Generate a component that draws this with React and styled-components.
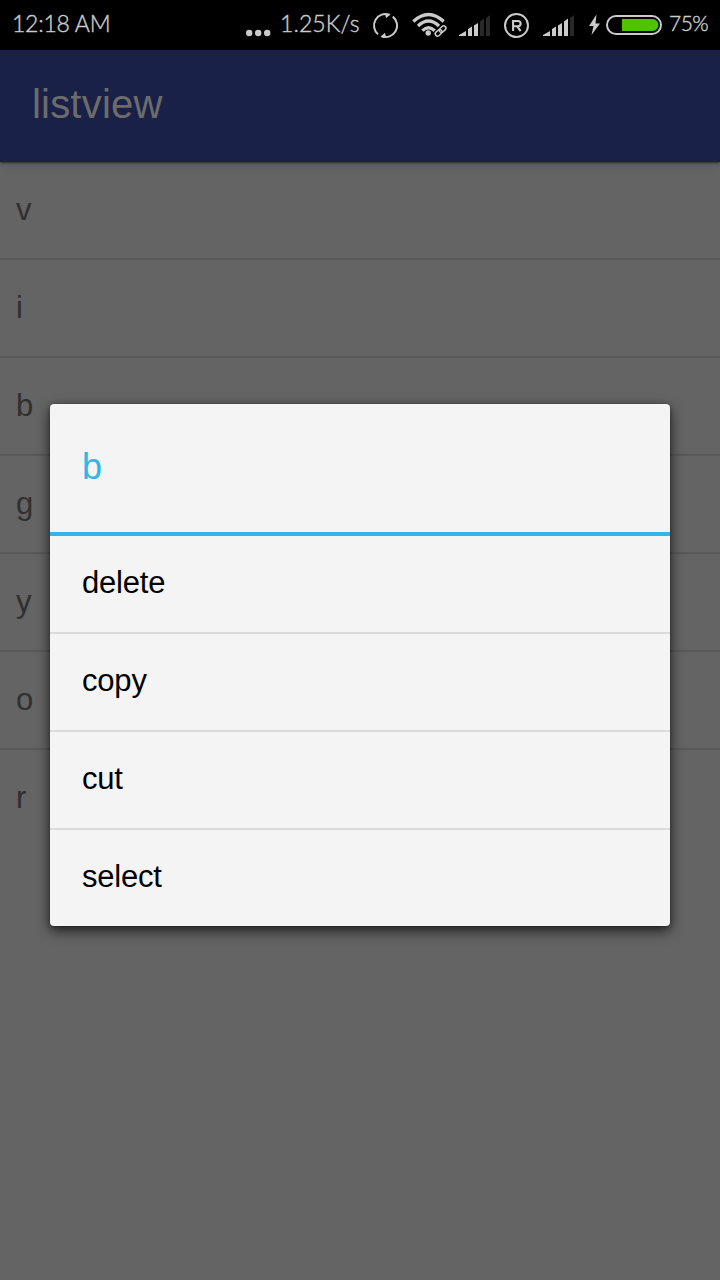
import React from 'react';
import styled, { createGlobalStyle } from 'styled-components';

const GlobalStyle = createGlobalStyle`
  * { box-sizing: border-box; }
  html, body { margin: 0; padding: 0; background: #646464; }
`;

const Screen = styled.main`
  position: relative;
  width: 720px;
  height: 1280px;
  overflow: hidden;
  background: #646464;
  font-family: 'Liberation Sans', Arial, sans-serif;
`;

const StatusBar = styled.header`
  display: flex;
  align-items: center;
  justify-content: space-between;
  height: 50px;
  padding: 0 12px;
  background: #000;
  color: #cbcbcb;
  font-family: Lato, 'Open Sans', sans-serif;
  font-weight: 300;
  -webkit-text-stroke: 0.4px #cbcbcb;
`;

const StatusText = styled.span`
  flex: none;
  width: ${({ $width }) => $width}px;
  height: 34px;
  padding-bottom: 4px;
  font-size: ${({ $size }) => $size}px;
  line-height: 30px;
  letter-spacing: ${({ $spacing }) => $spacing || 0}px;
  white-space: nowrap;
`;

const StatusGroup = styled.div`
  display: flex;
  align-items: center;
  height: 50px;
`;

const Icon = styled.svg`
  display: block;
  flex: none;
  width: ${({ $width }) => $width}px;
  height: 50px;
  margin-right: ${({ $gap }) => $gap || 0}px;
`;

const AppBar = styled.div`
  position: relative;
  display: flex;
  align-items: center;
  height: 112px;
  padding: 0 32px 5px;
  background: #1a2148;
  box-shadow: 0 1px 2px rgba(0, 0, 0, 0.5), 0 3px 10px rgba(0, 0, 0, 0.13);
`;

const Title = styled.h1`
  margin: 0;
  color: #6c6c6b;
  font-size: 40px;
  font-weight: 400;
  line-height: 48px;
  letter-spacing: 0.2px;
`;

const List = styled.ul`
  margin: 0;
  padding: 0;
  list-style: none;
`;

const ListRow = styled.li`
  display: flex;
  align-items: center;
  height: 98px;
  padding: 0 16px;
  border-bottom: 2px solid ${({ $last }) => ($last ? 'transparent' : '#595959')};
  color: #303030;
  font-size: 31px;
`;

const Dialog = styled.section`
  position: absolute;
  top: 404px;
  left: 50px;
  width: 620px;
  height: 522px;
  border-radius: 4px;
  background: #f4f4f4;
  box-shadow: 0 5px 14px rgba(0, 0, 0, 0.65), 0 1px 5px rgba(0, 0, 0, 0.35);
`;

const DialogTitle = styled.h2`
  display: flex;
  align-items: center;
  height: 132px;
  margin: 0;
  padding: 0 32px 2px;
  border-bottom: 4px solid #33b5e5;
  color: #33b5e5;
  font-size: 36px;
  font-weight: 400;
`;

const Option = styled.button`
  display: flex;
  align-items: center;
  width: 100%;
  height: ${({ $last }) => ($last ? 96 : 98)}px;
  padding: 0 32px 2px;
  border: 0;
  border-bottom: ${({ $last }) => ($last ? 0 : 2)}px solid #dadada;
  background: none;
  color: #000;
  font-family: inherit;
  font-size: 31px;
  letter-spacing: -0.2px;
  text-align: left;
`;

const items = ['v', 'i', 'b', 'g', 'y', 'o', 'r'];
const options = ['delete', 'copy', 'cut', 'select'];

const signalBars = [
  'M0 36V35L7 31V36Z',
  'M9 36V29L13 26.5V36Z',
  'M15 36V25.5L19 23V36Z',
  'M21 36V21.5L25 18.5V36Z',
  'M27 36V18L31 15V36Z',
];

function Signal({ level, gap }) {
  return (
    <Icon $width={31} $gap={gap} viewBox="0 0 31 50">
      {signalBars.map((d, i) => (
        <path key={d} d={d} fill={i < level ? '#cbcbcb' : '#292929'} />
      ))}
    </Icon>
  );
}

function Dots() {
  return (
    <Icon $width={25} $gap={9} viewBox="0 0 25 50" fill="#cbcbcb">
      <circle cx="3.2" cy="33" r="3.2" />
      <circle cx="12.2" cy="33" r="3.2" />
      <circle cx="21.2" cy="33" r="3.2" />
    </Icon>
  );
}

function Sync() {
  return (
    <Icon $width={26} $gap={14} viewBox="0 0 26 50" fill="none" stroke="#cbcbcb" strokeWidth="2">
      <path d="M6 34.2A11.5 11.5 0 0 1 17.5 14.7" />
      <path d="M20.8 16.6A11.5 11.5 0 0 1 9.5 36.3" />
      <path d="M13 14L18.5 14.2L14 18.2Z M14 37L8.5 36.8L13 32.8Z" fill="#cbcbcb" stroke="none" />
    </Icon>
  );
}

function Wifi() {
  return (
    <Icon $width={36} $gap={11} viewBox="0 0 36 50" fill="none" stroke="#cbcbcb">
      <path d="M1.3 21.5Q16.5 7.5 31.7 21.5M6 26Q16.5 16 27 26M10.4 30.7Q16.5 24.6 22.7 30.7" strokeWidth="3.3" />
      <circle cx="16.2" cy="33" r="2.7" fill="#cbcbcb" stroke="none" />
      <g transform="rotate(-43 28.6 31)" stroke="#000" strokeWidth="3.4">
        <rect x="22.2" y="28.7" width="7.4" height="4.6" rx="2.3" />
        <rect x="27.6" y="28.7" width="7.4" height="4.6" rx="2.3" />
      </g>
      <g transform="rotate(-43 28.6 31)" strokeWidth="1.5">
        <rect x="22.2" y="28.7" width="7.4" height="4.6" rx="2.3" />
        <rect x="27.6" y="28.7" width="7.4" height="4.6" rx="2.3" />
      </g>
    </Icon>
  );
}

function Registered() {
  return (
    <Icon $width={26} $gap={13} viewBox="0 0 26 50" fill="none" stroke="#cbcbcb">
      <circle cx="12.5" cy="25.5" r="11.5" strokeWidth="2" />
      <path d="M9.1 31V21H14C17.5 21 17.5 26.2 14 26.2H9.1M13 26.2L16.6 31" strokeWidth="2.1" />
    </Icon>
  );
}

function Battery() {
  return (
    <Icon $width={74} $gap={7} viewBox="0 0 74 50" fill="none">
      <path d="M8.5 14.5L1 26H5.5L3.5 35L12 23.5H7.5Z" fill="#cbcbcb" />
      <rect x="19" y="16" width="54" height="18" rx="9" stroke="#cbcbcb" strokeWidth="2" />
      <path d="M34 19H64.5A6 6 0 0 1 64.5 31H34Z" fill="#4cc400" />
    </Icon>
  );
}

export default function App() {
  return (
    <>
      <GlobalStyle />
      <Screen>
        <StatusBar>
          <StatusText $width={110} $size={23} $spacing={-0.25}>12:18 AM</StatusText>
          <StatusGroup>
            <Dots />
            <StatusText $width={92} $size={23} $spacing={0.1}>1.25K/s</StatusText>
            <Sync />
            <Wifi />
            <Signal level={3} gap={14} />
            <Registered />
            <Signal level={4} gap={14} />
            <Battery />
            <StatusText $width={39} $size={21} $spacing={-0.5}>75%</StatusText>
          </StatusGroup>
        </StatusBar>
        <AppBar>
          <Title>listview</Title>
        </AppBar>
        <List>
          {items.map((item, i) => (
            <ListRow key={item} $last={i === items.length - 1}>{item}</ListRow>
          ))}
        </List>
        <Dialog role="dialog">
          <DialogTitle>b</DialogTitle>
          {options.map((option, i) => (
            <Option key={option} $last={i === options.length - 1}>{option}</Option>
          ))}
        </Dialog>
      </Screen>
    </>
  );
}
